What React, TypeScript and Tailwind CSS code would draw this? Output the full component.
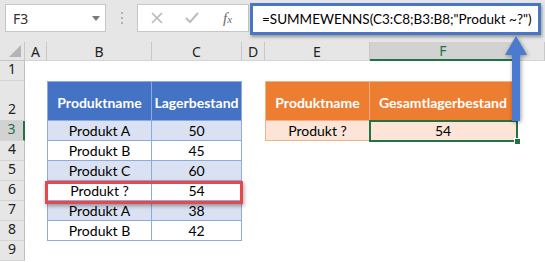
import React from "react";

const cols = ["A", "B", "C", "D", "E", "F", "G"];
const rows = [1, 2, 3, 4, 5, 6, 7, 8, 9];

const stock = [
  { name: "Produkt A", qty: 50 },
  { name: "Produkt B", qty: 45 },
  { name: "Produkt C", qty: 60 },
  { name: "Produkt ?", qty: 54 },
  { name: "Produkt A", qty: 38 },
  { name: "Produkt B", qty: 42 },
];

const cellFont = { fontFamily: "Lato, 'Liberation Sans', sans-serif" };
const uiFont = { fontFamily: "'Noto Sans', sans-serif" };

function FormulaBar() {
  return (
    <div className="flex h-[42px] items-start bg-[#e6e6e6] pl-[5px] pt-[4px]">
      <div className="relative flex h-[28px] w-[101px] items-center border border-[#c6c6c6] bg-white pl-[7px] text-[14px] text-[#333]" style={uiFont}>
        F3
        <span className="absolute right-[5px] top-[11px] h-0 w-0 border-x-[4px] border-t-[5px] border-x-transparent border-t-[#7a7a7a]" />
      </div>
      <div className="flex h-[28px] w-[31px] flex-col items-center justify-center gap-[3px]">
        <span className="h-[2px] w-[2px] bg-[#b0b0b0]" />
        <span className="h-[2px] w-[2px] bg-[#b0b0b0]" />
        <span className="h-[2px] w-[2px] bg-[#b0b0b0]" />
      </div>
      <div className="flex h-[28px] w-[112px] items-center border border-[#c6c6c6] bg-white">
        <svg width="14" height="14" viewBox="0 0 14 14" className="ml-[12px]">
          <path d="M2 2 L12 12 M12 2 L2 12" stroke="#b8b8b8" strokeWidth="1.6" />
        </svg>
        <svg width="16" height="14" viewBox="0 0 16 14" className="ml-[20px]">
          <path d="M2 7 L6 11 L14 2" stroke="#bcbcbc" strokeWidth="2" fill="none" />
        </svg>
        <span className="ml-[23px] text-[15px] italic text-[#6b6b6b]" style={{ fontFamily: "'Liberation Serif', serif" }}>
          f<span className="text-[11px]">x</span>
        </span>
      </div>
      <div className="-mt-[1px] ml-[1px] flex h-[32px] w-[291px] items-center whitespace-nowrap border-[3px] border-[#4a76c6] bg-white pl-[9px] text-[13.5px] text-black shadow-[1px_2px_3px_rgba(0,0,0,0.35)]" style={cellFont}>
        =SUMMEWENNS(C3:C8;B3:B8;"Produkt ~?")
      </div>
    </div>
  );
}

function TableCell({ r, c }: { r: number; c: string }) {
  // blue stock table, B2:C8
  if ((c === "B" || c === "C") && r >= 2 && r <= 8) {
    const edge = `border-r border-b border-[#8ea9db] ${c === "B" ? "border-l" : ""} ${r === 2 ? "border-t" : ""}`;
    if (r === 2) {
      return (
        <div className={`flex items-center justify-center bg-[#4472c4] pt-[2px] text-[14px] font-bold text-white ${edge}`} style={cellFont}>
          {c === "B" ? "Produktname" : "Lagerbestand"}
        </div>
      );
    }
    const item = stock[r - 3];
    const bg = r % 2 === 1 ? "bg-[#d9e1f2]" : "bg-white";
    return (
      <div className={`flex items-center justify-center text-[14px] text-black ${bg} ${edge}`} style={cellFont}>
        {c === "B" ? item.name : item.qty}
      </div>
    );
  }
  // orange result table, E2:F3
  if ((c === "E" || c === "F") && (r === 2 || r === 3)) {
    const edge = `border-r border-b border-[#f4b084] ${c === "E" ? "border-l" : ""} ${r === 2 ? "border-t" : ""}`;
    if (r === 2) {
      return (
        <div className={`flex items-center justify-center bg-[#ed7d31] pt-[2px] text-[14px] font-bold text-white ${edge}`} style={cellFont}>
          {c === "E" ? "Produktname" : "Gesamtlagerbestand"}
        </div>
      );
    }
    return (
      <div className={`flex items-center justify-center bg-[#fce4d6] text-[14px] text-black ${edge}`} style={cellFont}>
        {c === "E" ? "Produkt ?" : 54}
      </div>
    );
  }
  return <div className="bg-white" />;
}

export default function App() {
  return (
    <div className="relative h-[262px] w-[545px] overflow-hidden bg-white">
      <FormulaBar />

      <div className="grid grid-cols-[25px_22px_105px_90px_23px_105px_147px_1fr] grid-rows-[19px_20px_40px_repeat(7,20px)]">
        {/* select-all corner */}
        <div className="relative border-r border-b border-[#c8c8c8] bg-[#e6e6e6]">
          <span className="absolute bottom-[3px] right-[3px] h-0 w-0" style={{ borderBottom: "12px solid #b4b4b4", borderLeft: "12px solid transparent" }} />
        </div>
        {cols.map((c) => (
          <div
            key={c}
            className={`flex items-center justify-center text-[14px] ${c === "F" ? "border-b-2 border-b-[#217346] bg-[#d2d2d2] text-[#217346]" : "border-b border-b-[#d4d4d4] bg-[#e6e6e6] text-[#222]"} border-r border-r-[#c8c8c8]`}
            style={uiFont}
          >
            {c === "G" ? "" : c}
          </div>
        ))}

        {rows.map((r) => (
          <React.Fragment key={r}>
            <div
              className={`flex items-end justify-center pb-[1px] text-[14px] border-b border-b-[#d4d4d4] ${r === 3 ? "border-r-2 border-r-[#217346] bg-[#d2d2d2] text-[#217346]" : "border-r border-r-[#bfbfbf] bg-[#e6e6e6] text-[#222]"}`}
              style={uiFont}
            >
              {r}
            </div>
            {cols.map((c) => (
              <TableCell key={c} r={r} c={c} />
            ))}
          </React.Fragment>
        ))}
      </div>

      {/* active cell F3 with fill handle */}
      <div className="absolute left-[369px] top-[120px] h-[22px] w-[149px] border-2 border-[#217346]">
        <span className="absolute -bottom-[5px] -right-[5px] h-[7px] w-[7px] border border-white bg-[#217346]" />
      </div>

      {/* highlight around row 6 */}
      <div className="absolute left-[45px] top-[181px] h-[23px] w-[198px] border-[3px] border-[#e8474b] shadow-[1px_2px_4px_rgba(0,0,0,0.35)]" />

      {/* arrow pointing up to the formula */}
      <svg width="26" height="88" viewBox="0 0 26 88" className="absolute left-[503px] top-[35px] drop-shadow-[1px_1px_2px_rgba(0,0,0,0.4)]">
        <path d="M13 1 L24 20 L17 20 L17 86 L9 86 L9 20 L2 20 Z" fill="#4a7bd0" />
      </svg>
    </div>
  );
}
